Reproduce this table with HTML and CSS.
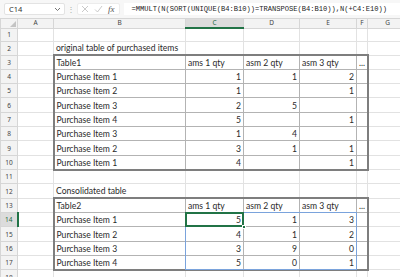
FILE: index.html
```html
<!DOCTYPE html>
<html lang="en">
<head>
  <meta charset="UTF-8" />
  <title>Consolidated table</title>
  <link rel="stylesheet" href="styles.css">
</head>
<body>

<div class="formula-bar">
  <div class="name-box">
    <span>C14</span>
    <svg class="chev" width="7" height="5" viewBox="0 0 7 5"><path d="M1 1 L3.5 3.5 L6 1" fill="none" stroke="#666" stroke-width="0.9"/></svg>
  </div>
  <span class="dots">⋮</span>
  <div class="fx-box">
    <svg width="8" height="8" viewBox="0 0 8 8"><path d="M1 1 L7 7 M7 1 L1 7" stroke="#bdbdbd" stroke-width="0.8"/></svg>
    <svg width="9" height="8" viewBox="0 0 9 8"><path d="M1 4.5 L3.5 7 L8 1" fill="none" stroke="#bdbdbd" stroke-width="0.8"/></svg>
    <span class="fx">fx</span>
  </div>
  <div class="formula">=MMULT(N(SORT(UNIQUE(B4:B10))=TRANSPOSE(B4:B10)),N(+C4:E10))</div>
</div>

<div class="grid-wrap">
<table class="sheet">
  <colgroup>
    <col style="width:17px"><col style="width:36px"><col style="width:132px"><col style="width:58px">
    <col style="width:56px"><col style="width:57px"><col style="width:11px"><col style="width:40px">
  </colgroup>
  <tr class="col-hdr">
    <td class="corner"><svg width="6" height="6" viewBox="0 0 6 6"><path d="M6 0 L6 6 L0 6 Z" fill="#c4c4c4"/></svg></td>
    <td>A</td><td>B</td><td class="active">C</td><td>D</td><td>E</td><td>F</td><td>G</td>
  </tr>
  <tr class="short"><td class="rh">1</td><td></td><td></td><td></td><td></td><td></td><td></td><td></td></tr>
  <tr class="short"><td class="rh">2</td><td></td><td class="txt">original table of purchased items</td><td></td><td></td><td></td><td></td><td></td></tr>

  <tr><td class="rh">3</td><td></td><td class="t tl tt txt">Table1</td><td class="t tt txt">ams 1 qty</td><td class="t tt txt">asm 2 qty</td><td class="t tt txt">asm 3 qty</td><td class="t tt tr txt">...</td><td></td></tr>
  <tr><td class="rh">4</td><td></td><td class="t tl txt">Purchase Item 1</td><td class="t num">1</td><td class="t num">1</td><td class="t num">2</td><td class="t tr"></td><td></td></tr>
  <tr><td class="rh">5</td><td></td><td class="t tl txt">Purchase Item 2</td><td class="t num">1</td><td class="t num"></td><td class="t num">1</td><td class="t tr"></td><td></td></tr>
  <tr><td class="rh">6</td><td></td><td class="t tl txt">Purchase Item 3</td><td class="t num">2</td><td class="t num">5</td><td class="t num"></td><td class="t tr"></td><td></td></tr>
  <tr><td class="rh">7</td><td></td><td class="t tl txt">Purchase Item 4</td><td class="t num">5</td><td class="t num"></td><td class="t num">1</td><td class="t tr"></td><td></td></tr>
  <tr><td class="rh">8</td><td></td><td class="t tl txt">Purchase Item 3</td><td class="t num">1</td><td class="t num">4</td><td class="t num"></td><td class="t tr"></td><td></td></tr>
  <tr><td class="rh">9</td><td></td><td class="t tl txt">Purchase Item 2</td><td class="t num">3</td><td class="t num">1</td><td class="t num">1</td><td class="t tr"></td><td></td></tr>
  <tr><td class="rh">10</td><td></td><td class="t tl tb txt">Purchase Item 1</td><td class="t tb num">4</td><td class="t tb num"></td><td class="t tb num">1</td><td class="t tb tr"></td><td></td></tr>

  <tr><td class="rh">11</td><td></td><td></td><td></td><td></td><td></td><td></td><td></td></tr>
  <tr><td class="rh">12</td><td></td><td class="txt">Consolidated table</td><td></td><td></td><td></td><td></td><td></td></tr>

  <tr><td class="rh">13</td><td></td><td class="t tl tt txt">Table2</td><td class="t tt txt">ams 1 qty</td><td class="t tt txt">asm 2 qty</td><td class="t tt txt">asm 3 qty</td><td class="t tt tr txt">...</td><td></td></tr>
  <tr><td class="rh active">14</td><td></td><td class="t tl txt">Purchase Item 1</td>
    <td class="t num sel">5<div class="spill"></div><div class="handle"></div></td>
    <td class="t num">1</td><td class="t num">3</td><td class="t tr"></td><td></td></tr>
  <tr><td class="rh">15</td><td></td><td class="t tl txt">Purchase Item 2</td><td class="t num">4</td><td class="t num">1</td><td class="t num">2</td><td class="t tr"></td><td></td></tr>
  <tr><td class="rh">16</td><td></td><td class="t tl txt">Purchase Item 3</td><td class="t num">3</td><td class="t num">9</td><td class="t num">0</td><td class="t tr"></td><td></td></tr>
  <tr><td class="rh">17</td><td></td><td class="t tl tb txt">Purchase Item 4</td><td class="t tb num">5</td><td class="t tb num">0</td><td class="t tb num">1</td><td class="t tb tr"></td><td></td></tr>
  <tr><td class="rh">18</td><td></td><td></td><td></td><td></td><td></td><td></td><td></td></tr>
</table>
</div>

</body>
</html>
```

FILE: styles.css
```css
* {
  box-sizing: border-box;
}

body {
  margin: 0;
  background: #fff;
  font-family: 'Lato', 'Noto Sans', sans-serif;
  color: #222;
  overflow: hidden;
}

/* formula bar */

.formula-bar {
  display: flex;
  align-items: center;
  height: 18px;
  padding: 0 0 0 4px;
  background: #f7f7f7;
}

.name-box {
  display: flex;
  align-items: center;
  justify-content: space-between;
  width: 61px;
  height: 12px;
  padding: 0 3px 0 4px;
  background: #fff;
  border: 1px solid #e3e3e3;
  border-radius: 2px;
  font-family: 'Noto Sans', sans-serif;
  font-size: 7.5px;
  color: #333;
}

.dots {
  width: 12px;
  text-align: center;
  font-size: 8px;
  color: #aaa;
}

.fx-box {
  display: flex;
  align-items: center;
  gap: 5px;
  height: 12px;
  padding: 0 4px 0 3px;
  background: #fff;
  border: 1px solid #ececec;
  border-radius: 2px;
}

.fx {
  font-family: 'Liberation Serif', serif;
  font-style: italic;
  font-size: 9px;
  color: #555;
}

.formula {
  flex: 1;
  height: 12px;
  margin-left: 4px;
  padding-left: 8px;
  background: #fff;
  font-family: 'Liberation Mono', monospace;
  font-size: 7.1px;
  line-height: 12px;
  color: #222;
  white-space: nowrap;
  overflow: hidden;
}

/* sheet grid */

.grid-wrap {
  width: 400px;
  overflow: hidden;
}

.sheet {
  table-layout: fixed;
  width: 407px;
  border-collapse: collapse;
  font-size: 8.6px;
  color: #2a2a2a;
}

.sheet td {
  height: 14.33px;
  padding: 0 2px;
  border: 1px solid #e2e2e2;
  white-space: nowrap;
  overflow: visible;
  vertical-align: bottom;
  line-height: 11px;
}

.sheet tr.short td {
  height: 13.5px;
}

.col-hdr td {
  height: 9px;
  background: #f3f3f3;
  border-color: #d6d6d6;
  text-align: center;
  vertical-align: middle;
  font-family: 'Noto Sans', sans-serif;
  font-size: 6.5px;
  line-height: 8px;
  color: #444;
}

.col-hdr td.corner {
  text-align: right;
  vertical-align: bottom;
  padding: 0 1px 1px 0;
  line-height: 0;
}

.col-hdr td.active {
  background: #dcdcdc;
  color: #1d6b3e;
  border-bottom: 2px solid #217346;
}

.sheet td.rh {
  background: #f3f3f3;
  border-color: #d6d6d6;
  text-align: center;
  vertical-align: middle;
  padding: 0;
  font-family: 'Noto Sans', sans-serif;
  font-size: 6.5px;
  color: #444;
}

.sheet td.rh.active {
  background: #dcdcdc;
  color: #1d6b3e;
  border-right: 2px solid #217346;
}

.txt {
  text-align: left;
}

.num {
  text-align: right;
}

/* excel table borders */

.sheet td.t {
  border: 1px solid #b3b3b3;
}
.sheet td.tl { border-left: 2px solid #7e7e7e; }
.sheet td.tr { border-right: 2px solid #7e7e7e; }
.sheet td.tt { border-top: 2px solid #7e7e7e; }
.sheet td.tb { border-bottom: 2px solid #7e7e7e; }

/* active cell + spill range */

.sheet td.sel {
  position: relative;
}

.spill {
  position: absolute;
  left: -1px;
  top: -1px;
  width: 172px;
  height: 58px;
  border: 1px solid #7aa3dc;
  pointer-events: none;
}

.sel::after {
  content: "";
  position: absolute;
  left: -1px;
  top: -1px;
  right: -1px;
  bottom: -1px;
  border: 2px solid #217346;
}

.handle {
  position: absolute;
  right: -3px;
  bottom: -3px;
  width: 4px;
  height: 4px;
  background: #217346;
  border: 1px solid #fff;
  z-index: 2;
}
```
